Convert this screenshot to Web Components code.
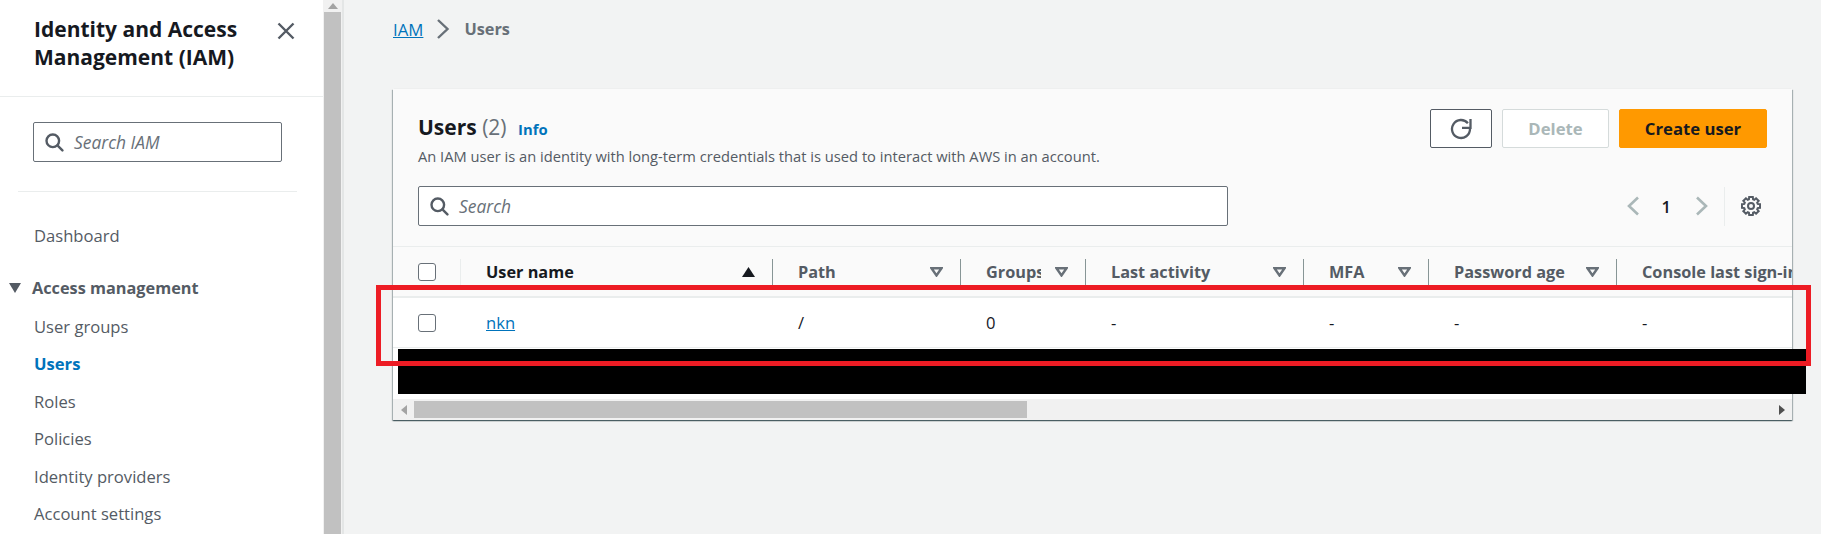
<!DOCTYPE html>
<html>
<head>
<meta charset="utf-8">
<style>
  html, body { margin: 0; height: 534px; overflow: hidden; background: #f2f3f3; }
  body { font-family: "Open Sans", "Noto Sans", sans-serif; color: #16191f; }
</style>
</head>
<body>
<iam-page>
  <iam-sidebar slot="side">
    <nav-item>Dashboard</nav-item>
    <nav-group>Access management</nav-group>
    <nav-item>User groups</nav-item>
    <nav-item active>Users</nav-item>
    <nav-item>Roles</nav-item>
    <nav-item>Policies</nav-item>
    <nav-item>Identity providers</nav-item>
    <nav-item>Account settings</nav-item>
  </iam-sidebar>
  <users-panel>
    <users-table>
      <check-cell head></check-cell>
      <head-cell sort="asc" strong>User name</head-cell>
      <head-cell>Path</head-cell>
      <head-cell>Groups</head-cell>
      <head-cell>Last activity</head-cell>
      <head-cell>MFA</head-cell>
      <head-cell>Password age</head-cell>
      <head-cell last>Console last sign-in</head-cell>

      <check-cell></check-cell>
      <body-cell link>nkn</body-cell>
      <body-cell>/</body-cell>
      <body-cell>0</body-cell>
      <body-cell>-</body-cell>
      <body-cell>-</body-cell>
      <body-cell>-</body-cell>
      <body-cell>-</body-cell>
    </users-table>
  </users-panel>
</iam-page>

<script>
const SEARCH_ICON = `<svg width="20" height="20" viewBox="0 0 20 20" fill="none" stroke="#545b64" stroke-width="2.4"><circle cx="8.8" cy="8.8" r="6.3"/><path d="M13.4 13.4l5 5" stroke-linecap="round"/></svg>`;

// 8 tooth gear outline, centred on 10,10
function gearPath() {
  const pts = [];
  for (let i = 0; i < 8; i++) {
    const a = (i * Math.PI) / 4;
    [[-0.3, 7], [-0.2, 9.2], [0.2, 9.2], [0.3, 7]].forEach(([da, r]) => {
      pts.push((10 + r * Math.sin(a + da)).toFixed(2) + ' ' + (10 - r * Math.cos(a + da)).toFixed(2));
    });
  }
  return 'M' + pts.join('L') + 'Z';
}

class IamPage extends HTMLElement {
  constructor() {
    super();
    this.attachShadow({ mode: 'open' });
  }

  connectedCallback() {
    this.shadowRoot.innerHTML = `
      <style>
        :host { display: flex; height: 534px; position: relative; overflow: hidden; }
        main { flex: 1; min-width: 0; padding: 0 29px 0 49px; }
        .crumbs { height: 58px; display: flex; align-items: center; font-size: 16.8px; color: #545b64; }
        .crumbs a { color: #0073bb; text-decoration: underline; }
        .crumbs svg { margin: 0 14px 0 13px; }
        .crumbs b { font-size: 16.3px; font-weight: 700; color: #687078; }
        .spacer { height: 31px; }
        /* annotations painted on the screenshot */
        .redact { position: absolute; left: 398px; top: 349px; width: 1408px; height: 45px; background: #000; }
        .mark { position: absolute; left: 376px; top: 285px; width: 1425px; height: 71px; border: 5px solid #ed1c24; }
      </style>
      <slot name="side"></slot>
      <main>
        <div class="crumbs">
          <a>IAM</a>
          <svg width="14" height="20" viewBox="0 0 14 20" fill="none" stroke="#687078" stroke-width="2.4"><path d="M2 1l9.5 9L2 19"/></svg>
          <b>Users</b>
        </div>
        <div class="spacer"></div>
        <slot></slot>
      </main>
      <div class="redact"></div>
      <div class="mark"></div>
    `;
  }
}

class IamSidebar extends HTMLElement {
  constructor() {
    super();
    this.attachShadow({ mode: 'open' });
  }

  connectedCallback() {
    this.shadowRoot.innerHTML = `
      <style>
        :host { display: flex; flex: none; width: 344px; height: 534px; }
        .pane { width: 323px; background: #fff; overflow: hidden; }
        .top { height: 96px; border-bottom: 1px solid #eaeded; display: flex; padding-left: 34px; }
        h2 { margin: 15px 0 0; width: 243px; font-size: 21px; line-height: 28px; font-weight: 700; color: #16191f; }
        .close { margin: 22px 0 0 0; }
        .find { padding: 25px 41px 29px 33px; }
        hr { margin: 0 26px 0 18px; border: 0; border-top: 1px solid #eaeded; }
        nav { padding-top: 25px; }
        .bar { width: 21px; background: #f1f1f1; display: flex; flex-direction: column; box-sizing: border-box; border-right: 2px solid #e4e6e6; align-items: center; }
        .arrow { height: 12px; display: flex; align-items: center; justify-content: center; flex: none; }
        .thumb { flex: 1; width: 17px; background: #c1c1c1; }
      </style>
      <div class="pane">
        <div class="top">
          <h2>Identity and Access Management (IAM)</h2>
          <svg class="close" width="18" height="18" viewBox="0 0 18 18" fill="none" stroke="#545b64" stroke-width="2.4"><path d="M1.5 1.5l15 15M16.5 1.5l-15 15"/></svg>
        </div>
        <div class="find"><search-box placeholder="Search IAM"></search-box></div>
        <hr>
        <nav><slot></slot></nav>
      </div>
      <div class="bar">
        <div class="arrow"><svg width="10" height="6" viewBox="0 0 10 6"><path d="M5 0l5 6H0z" fill="#a3a3a3"/></svg></div>
        <div class="thumb"></div>
      </div>
    `;
  }
}

class NavItem extends HTMLElement {
  constructor() {
    super();
    this.attachShadow({ mode: 'open' });
  }

  connectedCallback() {
    this.shadowRoot.innerHTML = `
      <style>
        :host { display: block; height: 37.5px; line-height: 37.5px; padding-left: 34px; font-size: 16.6px; color: #545b64; white-space: nowrap; }
        :host([active]) { color: #0073bb; font-weight: 700; }
      </style>
      <slot></slot>
    `;
  }
}

class NavGroup extends HTMLElement {
  constructor() {
    super();
    this.attachShadow({ mode: 'open' });
  }

  connectedCallback() {
    this.shadowRoot.innerHTML = `
      <style>
        :host { display: flex; align-items: center; height: 37.5px; margin: 15px 0 0.5px; padding-left: 9px; font-size: 16.3px; font-weight: 700; color: #545b64; white-space: nowrap; }
        svg { margin-right: 11px; }
      </style>
      <svg width="12" height="10" viewBox="0 0 12 10"><path d="M0 0h12L6 10z" fill="#545b64"/></svg>
      <slot></slot>
    `;
  }
}

class SearchBox extends HTMLElement {
  constructor() {
    super();
    this.attachShadow({ mode: 'open' });
  }

  connectedCallback() {
    this.shadowRoot.innerHTML = `
      <style>
        :host { display: flex; align-items: center; box-sizing: border-box; height: 40px; padding-left: 10px; background: #fff; border: 1px solid #687078; border-radius: 2px; font-size: 17.4px; font-style: italic; color: #687078; }
        span { margin-left: 10px; }
      </style>
      ${SEARCH_ICON}
      <span>${this.getAttribute('placeholder')}</span>
    `;
  }
}

class AwsButton extends HTMLElement {
  constructor() {
    super();
    this.attachShadow({ mode: 'open' });
  }

  connectedCallback() {
    this.shadowRoot.innerHTML = `
      <style>
        :host { display: flex; align-items: center; justify-content: center; box-sizing: border-box; height: 39px; border: 1px solid #545b64; border-radius: 2px; background: #fff; font-size: 16.7px; font-weight: 700; color: #545b64; white-space: nowrap; }
        :host([disabled]) { border-color: #d5dbdb; color: #aab7b8; }
        :host([primary]) { border-color: #ff9900; background: #ff9900; color: #16191f; }
      </style>
      <slot></slot>
    `;
  }
}

class UsersPanel extends HTMLElement {
  constructor() {
    super();
    this.attachShadow({ mode: 'open' });
  }

  connectedCallback() {
    this.shadowRoot.innerHTML = `
      <style>
        :host { display: block; height: 331px; background: #fafafa; box-shadow: 0 1px 1px 0 rgba(0,28,36,.45), 1px 1px 1px 0 rgba(0,28,36,.25), -1px 1px 1px 0 rgba(0,28,36,.25), 0 -1px 1px -1px rgba(0,28,36,.1); overflow: hidden; }
        .head { height: 158px; box-sizing: border-box; border-bottom: 1px solid #eaeded; padding: 20px 25px 0; }
        .row { display: flex; justify-content: space-between; }
        h1 { margin: 5px 0 0; font-size: 21px; line-height: 26px; font-weight: 700; color: #16191f; white-space: nowrap; }
        h1 span { font-weight: 400; color: #687078; }
        h1 a { margin-left: 6px; font-size: 14.8px; color: #0073bb; }
        p { margin: 3.5px 0 0; font-size: 14.7px; line-height: 20px; color: #545b64; white-space: nowrap; }
        .actions { display: flex; gap: 10px; }
        .tools { margin-top: 20.5px; display: flex; justify-content: space-between; align-items: center; }
        search-box { width: 810px; }
        .pager { display: flex; align-items: center; height: 40px; padding-right: 6px; }
        .num { margin: 0 24px 0 22px; font-size: 16.5px; font-weight: 600; color: #16191f; }
        .sep { width: 1px; height: 39px; background: #eaeded; margin: 0 16px 0 15px; }
        .track { height: 21px; background: #f1f1f1; display: flex; align-items: center; }
        .track .l { width: 21px; display: flex; justify-content: center; }
        .track .thumb { width: 613px; height: 17px; background: #c1c1c1; }
        .track .r { margin-left: auto; width: 21px; display: flex; justify-content: center; }
        .rows { height: 152px; background: #fff; overflow: hidden; }
      </style>
      <div class="head">
        <div class="row">
          <div>
            <h1>Users <span>(2)</span> <a>Info</a></h1>
            <p>An IAM user is an identity with long-term credentials that is used to interact with AWS in an account.</p>
          </div>
          <div class="actions">
            <aws-button style="width:62px">
              <svg width="22" height="22" viewBox="0 0 22 22" fill="none" stroke="#545b64" stroke-width="2.3"><path d="M20 11a9 9 0 1 1-2.1-5.8"/><path d="M12 9.8h8.5V1"/></svg>
            </aws-button>
            <aws-button disabled style="width:107px">Delete</aws-button>
            <aws-button primary style="width:148px">Create user</aws-button>
          </div>
        </div>
        <div class="tools">
          <search-box placeholder="Search"></search-box>
          <div class="pager">
            <svg width="14" height="20" viewBox="0 0 14 20" fill="none" stroke="#aab7b8" stroke-width="2.6"><path d="M12 1.5L3 10l9 8.5"/></svg>
            <span class="num">1</span>
            <svg width="14" height="20" viewBox="0 0 14 20" fill="none" stroke="#aab7b8" stroke-width="2.6"><path d="M2 1.5l9 8.5-9 8.5"/></svg>
            <span class="sep"></span>
            <svg width="20" height="20" viewBox="0 0 20 20" fill="none" stroke="#545b64" stroke-width="2"><circle cx="10" cy="10" r="3"/><path d="${gearPath()}"/></svg>
          </div>
        </div>
      </div>
      <div class="rows"><slot></slot></div>
      <div class="track">
        <div class="l"><svg width="6" height="10" viewBox="0 0 6 10"><path d="M6 0v10L0 5z" fill="#a3a3a3"/></svg></div>
        <div class="thumb"></div>
        <div class="r"><svg width="6" height="10" viewBox="0 0 6 10"><path d="M0 0v10l6-5z" fill="#505050"/></svg></div>
      </div>
    `;
  }
}

class UsersTable extends HTMLElement {
  constructor() {
    super();
    this.attachShadow({ mode: 'open' });
  }

  connectedCallback() {
    this.shadowRoot.innerHTML = `
      <style>
        :host { display: grid; grid-template-columns: 68px 312px 188px 125px 218px 125px 188px 300px; grid-template-rows: 51px 50px; width: 1524px; }
      </style>
      <slot></slot>
    `;
  }
}

class CheckCell extends HTMLElement {
  constructor() {
    super();
    this.attachShadow({ mode: 'open' });
  }

  connectedCallback() {
    this.shadowRoot.innerHTML = `
      <style>
        :host { display: flex; align-items: center; box-sizing: border-box; padding-left: 25px; background: #fff; border-bottom: 1px solid #eaeded; position: relative; }
        :host([head]) { background: #fafafa; border-bottom: 2px solid #eaeded; }
        :host([head])::after { content: ""; position: absolute; right: 0; top: 12px; height: 28px; width: 1px; background: #eaeded; }
        i { display: block; box-sizing: border-box; width: 18px; height: 18px; background: #fff; border: 1.5px solid #687078; border-radius: 3px; }
      </style>
      <i></i>
    `;
  }
}

class HeadCell extends HTMLElement {
  constructor() {
    super();
    this.attachShadow({ mode: 'open' });
  }

  connectedCallback() {
    const asc = this.getAttribute('sort') === 'asc';
    const caret = asc
      ? `<svg width="13" height="10" viewBox="0 0 13 10"><path d="M6.5 0l6.5 10H0z" fill="#16191f"/></svg>`
      : `<svg width="13" height="10" viewBox="0 0 13 10"><path d="M1.5 1.2h10l-5 7.3z" fill="none" stroke="#687078" stroke-width="2.4"/></svg>`;
    this.shadowRoot.innerHTML = `
      <style>
        :host { display: flex; align-items: center; box-sizing: border-box; padding: 0 18px 0 25px; background: #fafafa; border-bottom: 2px solid #eaeded; position: relative; font-size: 16.3px; font-weight: 700; color: #545b64; white-space: nowrap; }
        :host([strong]) { color: #16191f; }
        :host::after { content: ""; position: absolute; right: 0; top: 12px; height: 28px; width: 1px; background: #879596; }
        :host([last])::after { display: none; }
        .label { flex: 1; min-width: 0; overflow: hidden; margin-right: 14px; }
      </style>
      <span class="label"><slot></slot></span>
      ${this.hasAttribute('last') ? '' : caret}
    `;
  }
}

class BodyCell extends HTMLElement {
  constructor() {
    super();
    this.attachShadow({ mode: 'open' });
  }

  connectedCallback() {
    this.shadowRoot.innerHTML = `
      <style>
        :host { display: flex; align-items: center; box-sizing: border-box; padding: 0 0 1px 25px; background: #fff; border-bottom: 1px solid #eaeded; font-size: 16.6px; color: #16191f; }
        :host([link]) { color: #0073bb; text-decoration: underline; }
      </style>
      <slot></slot>
    `;
  }
}

customElements.define('iam-page', IamPage);
customElements.define('iam-sidebar', IamSidebar);
customElements.define('nav-item', NavItem);
customElements.define('nav-group', NavGroup);
customElements.define('search-box', SearchBox);
customElements.define('aws-button', AwsButton);
customElements.define('users-panel', UsersPanel);
customElements.define('users-table', UsersTable);
customElements.define('check-cell', CheckCell);
customElements.define('head-cell', HeadCell);
customElements.define('body-cell', BodyCell);
</script>
</body>
</html>
